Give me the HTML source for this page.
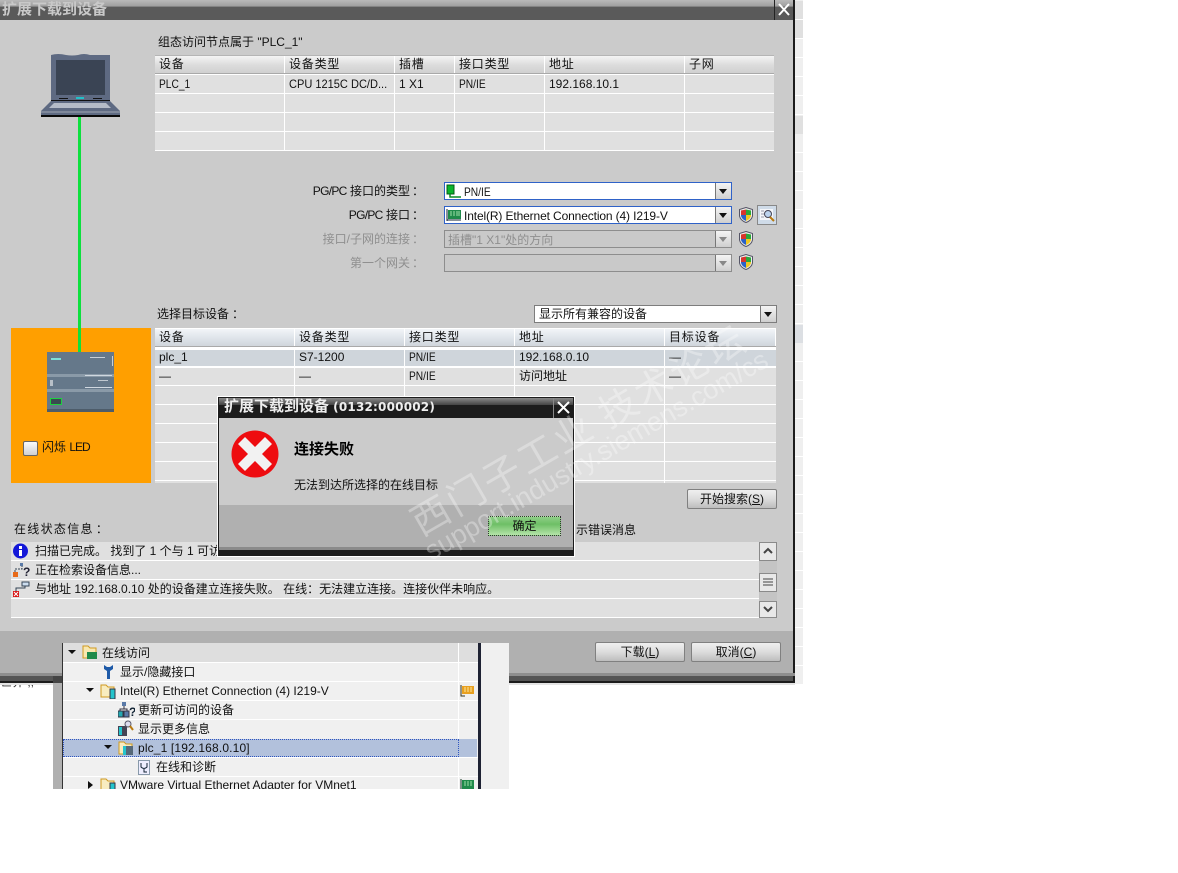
<!DOCTYPE html>
<html lang="zh"><head><meta charset="utf-8">
<style>
html,body{margin:0;padding:0;background:#fff;width:1178px;height:873px;overflow:hidden}
#r{position:relative;width:1178px;height:873px;overflow:hidden;font:12px/16px "Liberation Sans","WenQuanYi Zen Hei","Noto Sans CJK SC",sans-serif;color:#111}
#r div,#r svg{position:absolute}
.t{white-space:nowrap}
.g{color:#8f8f8f}
.hh{letter-spacing:.8px}
.n{transform:scaleX(.85);transform-origin:0 0}
.h{background:linear-gradient(#f4f4f4,#dcdcdc 50%,#cfcfcf);height:18px}
.h2{background:linear-gradient(#f2f5f8,#dfe4ea 50%,#ced4da);height:18px}
.c{background:#e0e0e0}
.b{background:linear-gradient(#efefef,#dcdcdc 50%,#bdbdbd);border:1px solid #808080;border-radius:2px;box-sizing:border-box;text-align:center;color:#111}
.sel{box-sizing:border-box;background:#fff;border:1px solid #2f62c8;height:18px}
.dis{box-sizing:border-box;background:#c9c9c9;border:1px solid #8d8d8d;height:18px}
.ar{box-sizing:border-box;width:16px;height:16px;right:0;top:0;background:linear-gradient(#f4f4f4,#cfcfcf);border-left:1px solid #777}
.ar:after{content:"";position:absolute;left:3px;top:6px;border:4px solid transparent;border-top:5px solid #111}
.dis .ar:after{border-top-color:#888}
</style></head><body><div id="r">

<!-- main dialog -->
<div style="left:0;top:0;width:793px;height:683px;background:#cbcbcb"></div>
<div style="left:0;top:0;width:793px;height:20px;background:linear-gradient(#b9b9b9,#a0a0a0 30%,#5a5a5a 36%,#5a5a5a)"></div>
<div class="t" style="left:2px;top:2px;font-size:15px;font-weight:bold;color:#c9c9c9">扩展下载到设备</div>
<div style="left:774px;top:0;width:1px;height:20px;background:#222"></div>
<svg style="left:775px;top:0" width="18" height="20"><path d="M4 4L14 15M14 4L4 15" stroke="#fff" stroke-width="2"/></svg>
<div style="left:793px;top:0;width:2px;height:683px;background:#1c1c1c"></div>
<div style="left:795px;top:0;width:8px;height:685px;background:repeating-linear-gradient(#efefef 0,#efefef 18px,#fff 18px,#fff 19px) 0 1px"></div>
<div style="left:795px;top:1px;width:8px;height:18px;background:#e0e0e0"></div>
<div style="left:795px;top:20px;width:8px;height:18px;background:#e0e0e0"></div>
<div style="left:795px;top:116px;width:8px;height:18px;background:#e0e0e0"></div>
<div style="left:795px;top:325px;width:8px;height:18px;background:#dcdfe3"></div>
<div style="left:0;top:631px;width:793px;height:42px;background:#b0b0b0"></div>
<div style="left:0;top:673px;width:795px;height:3px;background:#8e8e8e"></div>
<div style="left:0;top:676px;width:793px;height:5px;background:#555"></div>
<div style="left:0;top:681px;width:795px;height:2px;background:#1c1c1c"></div>
<div style="left:0;top:683px;width:795px;height:2px;background:#e4e4e4"></div>
<div class="t" style="left:0;top:685px;width:50px;height:3px;overflow:hidden;line-height:12px;color:#333"><span style="position:relative;top:-9px">世界 ,,</span></div>

<!-- laptop -->
<svg style="left:40px;top:52px" width="82" height="66" viewBox="0 0 82 66">
<path d="M11 3Q18 1 26 3Q32 4 38 3Q44 1 50 3H70V48H11Z" fill="#5e6a82"/>
<rect x="16" y="8" width="49" height="35" fill="#3a4454"/>
<rect x="36" y="45" width="8" height="2" fill="#22c0c8"/>
<rect x="19" y="46" width="9" height="1" fill="#111"/><rect x="53" y="46" width="9" height="1" fill="#111"/>
<rect x="11" y="48" width="59" height="1" fill="#111"/>
<path d="M11 49H70L80 59V63H1V59Z" fill="#5e6a82"/>
<path d="M14 51H66L71 56H9Z" fill="#b5bcc8"/>
<rect x="1" y="59" width="79" height="2" fill="#7f889a"/>
<rect x="1" y="63" width="79" height="2" fill="#0a0a0a"/>
</svg>
<div style="left:78px;top:117px;width:3px;height:235px;background:#0ee03e"></div>

<!-- table 1 -->
<div class="t" style="left:158px;top:34px">组态访问节点属于 "PLC_1"</div>
<div style="left:155px;top:55px;width:619px;height:96px;background:#fff"></div>
<div style="left:155px;top:55px;width:619px;height:1px;background:#b5b5b5"></div>
<div class="h" style="left:155px;top:56px;width:129px"></div><div class="h" style="left:285px;top:56px;width:109px"></div><div class="h" style="left:395px;top:56px;width:59px"></div><div class="h" style="left:455px;top:56px;width:89px"></div><div class="h" style="left:545px;top:56px;width:139px"></div><div class="h" style="left:685px;top:56px;width:89px"></div>
<div style="left:155px;top:73px;width:619px;height:1px;background:#a9a9a9"></div>
<div class="c" style="left:155px;top:75px;width:129px;height:18px"></div><div class="c" style="left:285px;top:75px;width:109px;height:18px"></div><div class="c" style="left:395px;top:75px;width:59px;height:18px"></div><div class="c" style="left:455px;top:75px;width:89px;height:18px"></div><div class="c" style="left:545px;top:75px;width:139px;height:18px"></div><div class="c" style="left:685px;top:75px;width:89px;height:18px"></div>
<div class="c" style="left:155px;top:94px;width:129px;height:18px"></div><div class="c" style="left:285px;top:94px;width:109px;height:18px"></div><div class="c" style="left:395px;top:94px;width:59px;height:18px"></div><div class="c" style="left:455px;top:94px;width:89px;height:18px"></div><div class="c" style="left:545px;top:94px;width:139px;height:18px"></div><div class="c" style="left:685px;top:94px;width:89px;height:18px"></div>
<div class="c" style="left:155px;top:113px;width:129px;height:18px"></div><div class="c" style="left:285px;top:113px;width:109px;height:18px"></div><div class="c" style="left:395px;top:113px;width:59px;height:18px"></div><div class="c" style="left:455px;top:113px;width:89px;height:18px"></div><div class="c" style="left:545px;top:113px;width:139px;height:18px"></div><div class="c" style="left:685px;top:113px;width:89px;height:18px"></div>
<div class="c" style="left:155px;top:132px;width:129px;height:18px"></div><div class="c" style="left:285px;top:132px;width:109px;height:18px"></div><div class="c" style="left:395px;top:132px;width:59px;height:18px"></div><div class="c" style="left:455px;top:132px;width:89px;height:18px"></div><div class="c" style="left:545px;top:132px;width:139px;height:18px"></div><div class="c" style="left:685px;top:132px;width:89px;height:18px"></div>
<div class="t hh" style="left:159px;top:56px">设备</div><div class="t hh" style="left:289px;top:56px">设备类型</div><div class="t hh" style="left:399px;top:56px">插槽</div><div class="t hh" style="left:459px;top:56px">接口类型</div><div class="t hh" style="left:549px;top:56px">地址</div><div class="t hh" style="left:689px;top:56px">子网</div>
<div class="t n" style="left:159px;top:76px">PLC_1</div><div class="t" style="left:289px;top:76px;transform:scaleX(.92);transform-origin:0 0">CPU 1215C DC/D...</div><div class="t" style="left:399px;top:76px">1 X1</div><div class="t n" style="left:459px;top:76px">PN/IE</div><div class="t" style="left:549px;top:76px">192.168.10.1</div>

<!-- interface form -->
<div class="t" style="right:754px;top:183px"><span style="letter-spacing:-.7px">PG/PC</span> 接口的类型<span style="margin-left:2px">：</span></div>
<div class="t" style="right:754px;top:207px"><span style="letter-spacing:-.7px">PG/PC</span> 接口<span style="margin-left:2px">：</span></div>
<div class="t g" style="right:754px;top:231px">接口/子网的连接<span style="margin-left:2px">：</span></div>
<div class="t g" style="right:754px;top:255px">第一个网关<span style="margin-left:2px">：</span></div>
<div class="sel" style="left:444px;top:182px;width:288px"><div class="ar"></div></div>
<div class="sel" style="left:444px;top:206px;width:288px"><div class="ar"></div></div>
<div class="dis" style="left:444px;top:230px;width:288px"><div class="ar"></div></div>
<div class="dis" style="left:444px;top:254px;width:288px"><div class="ar"></div></div>
<svg style="left:446px;top:184px" width="16" height="15"><rect x="1" y="1" width="7" height="9" fill="#0bb52c" stroke="#045a14"/><path d="M4 10V13H15" stroke="#0a8a22" stroke-width="1.5" fill="none"/></svg>
<div class="t n" style="left:464px;top:184px">PN/IE</div>
<svg style="left:446px;top:208px" width="16" height="14"><rect x="2" y="2" width="13" height="9" fill="#1f8a4a"/><path d="M1 1V13M1 12H15" stroke="#123" fill="none"/><path d="M5 3V8M8 3V8M11 3V8M13 3V8" stroke="#9fe0a8"/></svg>
<div class="t" style="left:464px;top:208px;letter-spacing:-.13px">Intel(R) Ethernet Connection (4) I219-V</div>
<div class="t g" style="left:448px;top:232px">插槽"1 X1"处的方向</div>
<svg style="left:739px;top:207px" width="14" height="16" viewBox="0 0 14 16"><path d="M7 .5L13.5 2.5V9Q12.5 13.5 7 15.5Q1.500 13.500 .5 9V2.500Z" fill="#eee" stroke="#556"/><path d="M7 2.500V8H2V3.500Z" fill="#d8342c"/><path d="M7 2.500L12 3.500V8H7Z" fill="#2aa83a"/><path d="M2 8H7V14Q3 12.500 2 9Z" fill="#2a62c8"/><path d="M7 8H12V9Q11 12.500 7 14Z" fill="#f0c820"/></svg>
<svg style="left:739px;top:231px" width="14" height="16" viewBox="0 0 14 16"><path d="M7 .5L13.5 2.5V9Q12.5 13.5 7 15.5Q1.500 13.500 .5 9V2.500Z" fill="#eee" stroke="#556"/><path d="M7 2.500V8H2V3.500Z" fill="#d8342c"/><path d="M7 2.500L12 3.500V8H7Z" fill="#2aa83a"/><path d="M2 8H7V14Q3 12.500 2 9Z" fill="#2a62c8"/><path d="M7 8H12V9Q11 12.500 7 14Z" fill="#f0c820"/></svg>
<svg style="left:739px;top:254px" width="14" height="16" viewBox="0 0 14 16"><path d="M7 .5L13.5 2.5V9Q12.5 13.5 7 15.5Q1.500 13.500 .5 9V2.500Z" fill="#eee" stroke="#556"/><path d="M7 2.500V8H2V3.500Z" fill="#d8342c"/><path d="M7 2.500L12 3.500V8H7Z" fill="#2aa83a"/><path d="M2 8H7V14Q3 12.500 2 9Z" fill="#2a62c8"/><path d="M7 8H12V9Q11 12.500 7 14Z" fill="#f0c820"/></svg>
<svg style="left:757px;top:205px" width="20" height="20"><rect x=".5" y=".5" width="19" height="19" fill="#cfdbe8" stroke="#888"/><rect x="3" y="4" width="13" height="11" fill="#f4f6fa"/><circle cx="11" cy="9" r="3.500" fill="#bcd3ee" stroke="#445"/><path d="M13 12L17 16" stroke="#b87a10" stroke-width="2"/><path d="M4 6H7M4 9H7M4 12H7" stroke="#99a"/></svg>

<!-- orange panel -->
<div style="left:11px;top:328px;width:140px;height:155px;background:#ff9f00"></div>
<div style="left:78px;top:328px;width:3px;height:24px;background:#0ee03e"></div>
<svg style="left:47px;top:352px" width="67" height="60" viewBox="0 0 67 60">
<rect width="67" height="60" fill="#65788a"/>
<rect y="22" width="67" height="3" fill="#8a9aa8"/><rect y="37" width="67" height="3" fill="#8a9aa8"/>
<rect x="4" y="6" width="10" height="2" fill="#7fe0d8"/>
<rect x="43" y="5" width="15" height="1" fill="#c8d0d8"/><rect x="65" y="4" width="1" height="10" fill="#c8d0d8"/>
<rect x="38" y="23" width="27" height="1" fill="#d0d8e0"/><rect x="38" y="35" width="27" height="1" fill="#d0d8e0"/><rect x="51" y="28" width="10" height="1" fill="#c0c8d0"/>
<rect x="3" y="28" width="3" height="6" fill="#b8c0c8"/>
<rect x="3.500" y="46.500" width="11" height="6" fill="#3a4a50" stroke="#1ed040"/>
<rect y="57" width="67" height="3" fill="#4d5c6a"/>
</svg>
<div style="left:23px;top:441px;width:15px;height:15px;box-sizing:border-box;background:linear-gradient(#fafafa,#d0d0d0);border:1px solid #666;border-radius:2px"></div>
<div class="t" style="left:42px;top:439px">闪烁 <span style="letter-spacing:-1px">LED</span></div>

<!-- table 2 -->
<div class="t" style="left:157px;top:306px">选择目标设备<span style="margin-left:3px">：</span></div>
<div style="left:534px;top:305px;width:243px;height:18px;box-sizing:border-box;background:#fff;border:1px solid #7d7d7d"><div class="ar" style="background:linear-gradient(#f4f4f4,#cfcfcf)"></div></div>
<div class="t" style="left:539px;top:306px">显示所有兼容的设备</div>
<div style="left:155px;top:328px;width:621px;height:155px;background:#fff"></div>
<div class="h2" style="left:155px;top:329px;width:139px"></div><div class="h2" style="left:295px;top:329px;width:109px"></div><div class="h2" style="left:405px;top:329px;width:109px"></div><div class="h2" style="left:515px;top:329px;width:149px"></div><div class="h2" style="left:665px;top:329px;width:110px"></div>
<div style="left:155px;top:346px;width:621px;height:1px;background:#a9a9a9"></div>
<div style="left:155px;top:350px;width:139px;height:16px;background:#cfd5db"></div><div style="left:295px;top:350px;width:109px;height:16px;background:#cfd5db"></div><div style="left:405px;top:350px;width:109px;height:16px;background:#cfd5db"></div><div style="left:515px;top:350px;width:149px;height:16px;background:#cfd5db"></div><div style="left:665px;top:350px;width:111px;height:16px;background:#cfd5db"></div>
<div class="c" style="left:155px;top:368px;width:139px;height:17px"></div><div class="c" style="left:295px;top:368px;width:109px;height:17px"></div><div class="c" style="left:405px;top:368px;width:109px;height:17px"></div><div class="c" style="left:515px;top:368px;width:149px;height:17px"></div><div class="c" style="left:665px;top:368px;width:111px;height:17px"></div>
<div class="c" style="left:155px;top:386px;width:139px;height:18px"></div><div class="c" style="left:295px;top:386px;width:109px;height:18px"></div><div class="c" style="left:405px;top:386px;width:109px;height:18px"></div><div class="c" style="left:515px;top:386px;width:149px;height:18px"></div><div class="c" style="left:665px;top:386px;width:111px;height:18px"></div>
<div class="c" style="left:155px;top:405px;width:139px;height:18px"></div><div class="c" style="left:295px;top:405px;width:109px;height:18px"></div><div class="c" style="left:405px;top:405px;width:109px;height:18px"></div><div class="c" style="left:515px;top:405px;width:149px;height:18px"></div><div class="c" style="left:665px;top:405px;width:111px;height:18px"></div>
<div class="c" style="left:155px;top:424px;width:139px;height:18px"></div><div class="c" style="left:295px;top:424px;width:109px;height:18px"></div><div class="c" style="left:405px;top:424px;width:109px;height:18px"></div><div class="c" style="left:515px;top:424px;width:149px;height:18px"></div><div class="c" style="left:665px;top:424px;width:111px;height:18px"></div>
<div class="c" style="left:155px;top:443px;width:139px;height:18px"></div><div class="c" style="left:295px;top:443px;width:109px;height:18px"></div><div class="c" style="left:405px;top:443px;width:109px;height:18px"></div><div class="c" style="left:515px;top:443px;width:149px;height:18px"></div><div class="c" style="left:665px;top:443px;width:111px;height:18px"></div>
<div class="c" style="left:155px;top:462px;width:139px;height:18px"></div><div class="c" style="left:295px;top:462px;width:109px;height:18px"></div><div class="c" style="left:405px;top:462px;width:109px;height:18px"></div><div class="c" style="left:515px;top:462px;width:149px;height:18px"></div><div class="c" style="left:665px;top:462px;width:111px;height:18px"></div>
<div class="c" style="left:155px;top:481px;width:139px;height:2px"></div><div class="c" style="left:295px;top:481px;width:109px;height:2px"></div><div class="c" style="left:405px;top:481px;width:109px;height:2px"></div><div class="c" style="left:515px;top:481px;width:149px;height:2px"></div><div class="c" style="left:665px;top:481px;width:111px;height:2px"></div>
<div class="t hh" style="left:159px;top:329px">设备</div><div class="t hh" style="left:299px;top:329px">设备类型</div><div class="t hh" style="left:409px;top:329px">接口类型</div><div class="t hh" style="left:519px;top:329px">地址</div><div class="t hh" style="left:669px;top:329px">目标设备</div>
<div class="t" style="left:159px;top:349px">plc_1</div><div class="t" style="left:299px;top:349px">S7-1200</div><div class="t n" style="left:409px;top:349px">PN/IE</div><div class="t" style="left:519px;top:349px">192.168.0.10</div><div class="t" style="left:669px;top:349px">—</div>
<div class="t" style="left:159px;top:368px">—</div><div class="t" style="left:299px;top:368px">—</div><div class="t n" style="left:409px;top:368px">PN/IE</div><div class="t" style="left:519px;top:368px">访问地址</div><div class="t" style="left:669px;top:368px">—</div>
<div class="b" style="left:687px;top:489px;width:90px;height:20px;line-height:19px">开始搜索(<u>S</u>)</div>

<!-- status -->
<div class="t" style="left:14px;top:521px;letter-spacing:1.300px">在线状态信息<span style="margin-left:2px">：</span></div>
<div class="t" style="left:576px;top:522px">示错误消息</div>
<div class="c" style="left:11px;top:542px;width:748px;height:18px"></div>
<div class="c" style="left:11px;top:561px;width:748px;height:18px"></div>
<div class="c" style="left:11px;top:580px;width:748px;height:18px"></div>
<div class="c" style="left:11px;top:599px;width:748px;height:18px"></div>
<div style="left:11px;top:560px;width:748px;height:1px;background:#fff"></div><div style="left:11px;top:579px;width:748px;height:1px;background:#fff"></div><div style="left:11px;top:598px;width:748px;height:1px;background:#fff"></div><div style="left:11px;top:617px;width:748px;height:1px;background:#fff"></div>
<svg style="left:12px;top:543px" width="17" height="16"><circle cx="8.500" cy="8" r="7.500" fill="#1418d8"/><rect x="7" y="7" width="3" height="6" fill="#fff"/><rect x="7" y="3" width="3" height="3" fill="#fff"/></svg>
<div class="t" style="left:35px;top:543px">扫描已完成。 找到了 1 个与 1 可访</div>
<svg style="left:12px;top:562px" width="18" height="16"><rect x="1" y="10" width="5" height="5" fill="#e86a18"/><rect x="8" y="1" width="3" height="3" fill="#5a7aa8"/><path d="M3 10V7H10V4" stroke="#345" stroke-dasharray="2 1" fill="none"/><text x="11" y="14" font-size="12" font-weight="bold" fill="#223" font-family="Liberation Sans">?</text></svg>
<div class="t" style="left:35px;top:562px">正在检索设备信息...</div>
<svg style="left:12px;top:581px" width="18" height="16"><rect x="1" y="10" width="6" height="6" fill="#d81818"/><path d="M2 11L6 15M6 11L2 15" stroke="#fff"/><rect x="10" y="1" width="7" height="4" fill="#cde" stroke="#345"/><path d="M13 5V7H4V10" stroke="#345" fill="none"/></svg>
<div class="t" style="left:35px;top:581px">与地址 192.168.0.10 处的设备建立连接失败。 在线：无法建立连接。连接伙伴未响应。</div>
<div style="left:759px;top:542px;width:18px;height:76px;background:#c4c4c4"></div>
<svg style="left:759px;top:542px" width="18" height="76"><rect x=".5" y=".5" width="17" height="18" fill="#e8e8e8" stroke="#8a8a8a"/><path d="M5 11L9 7L13 11" stroke="#444" stroke-width="2" fill="none"/><rect x=".5" y="31.500" width="17" height="18" fill="#e8e8e8" stroke="#8a8a8a"/><path d="M4 37H14M4 40H14M4 43H14" stroke="#444"/><rect x=".5" y="59.500" width="17" height="16" fill="#e8e8e8" stroke="#8a8a8a"/><path d="M5 65L9 69L13 65" stroke="#444" stroke-width="2" fill="none"/></svg>

<!-- buttons -->
<div class="b" style="left:595px;top:642px;width:90px;height:20px;line-height:19px">下载(<u>L</u>)</div>
<div class="b" style="left:691px;top:642px;width:90px;height:20px;line-height:19px">取消(<u>C</u>)</div>

<!-- error dialog -->
<div style="left:217px;top:396px;width:358px;height:161px;background:#fff"></div>
<div style="left:218px;top:397px;width:356px;height:159px;background:#1c1c1c"></div>
<div style="left:219px;top:398px;width:354px;height:7px;background:linear-gradient(#888,#444)"></div>
<div class="t" style="left:224px;top:399px;font-size:15px;font-weight:bold;color:#eee">扩展下载到设备 <span style="font:bold 12px 'DejaVu Sans',sans-serif;letter-spacing:.2px">(0132:000002)</span></div>
<div style="left:553px;top:398px;width:1px;height:20px;background:#888"></div>
<svg style="left:554px;top:398px" width="19" height="20"><path d="M4 4L15 15M15 4L4 15" stroke="#fff" stroke-width="2"/></svg>
<div style="left:219px;top:418px;width:354px;height:87px;background:#cbcbcb"></div>
<div style="left:219px;top:505px;width:354px;height:42px;background:#b0b0b0"></div>
<div style="left:219px;top:547px;width:354px;height:3px;background:#8a8a8a"></div>
<svg style="left:231px;top:430px" width="48" height="48"><circle cx="24" cy="24" r="23.500" fill="#ee0c10"/><path d="M7 14L14 7L24 17L34 7L41 14L31 24L41 34L34 41L24 31L14 41L7 34L17 24Z" fill="#f2f2f2"/></svg>
<div class="t" style="left:294px;top:442px;font-size:15px;font-weight:bold;color:#000">连接失败</div>
<div class="t" style="left:294px;top:477px">无法到达所选择的在线目标</div>
<div style="left:488px;top:516px;width:73px;height:20px;box-sizing:border-box;background:linear-gradient(#8fcf88,#6ebf66 40%,#b4e4a8);border:1px dotted #333;text-align:center;line-height:18px;color:#111">确定</div>

<!-- watermark -->
<div class="t" style="left:413px;top:501px;font-size:38px;line-height:44px;letter-spacing:3px;color:#fff;opacity:.32;transform:rotate(-30deg);transform-origin:0 50%;font-family:'Noto Sans CJK SC',sans-serif">西门子工业 技术论坛</div>
<div class="t" style="left:427px;top:538px;font-size:27px;line-height:30px;color:#fff;opacity:.32;transform:rotate(-30deg);transform-origin:0 50%">support.industry.siemens.com/cs</div>

<!-- lower tree panel -->
<div style="left:53px;top:643px;width:456px;height:146px;background:#f0f0f0"></div>
<div style="left:53px;top:643px;width:10px;height:30px;background:#b0b0b0"></div>
<div style="left:53px;top:673px;width:10px;height:3px;background:#8e8e8e"></div>
<div style="left:53px;top:676px;width:10px;height:7px;background:#444"></div>
<div style="left:53px;top:683px;width:10px;height:106px;background:#b0b0b0"></div>
<div style="left:62px;top:643px;width:1px;height:146px;background:#333"></div>
<div style="left:63px;top:643px;width:395px;height:19px;background:#dedede"></div>
<div style="left:459px;top:643px;width:19px;height:19px;background:#dedede"></div>
<div style="left:63px;top:662px;width:415px;height:1px;background:#fff"></div><div style="left:63px;top:681px;width:415px;height:1px;background:#fff"></div><div style="left:63px;top:700px;width:415px;height:1px;background:#fff"></div><div style="left:63px;top:719px;width:415px;height:1px;background:#fff"></div><div style="left:63px;top:757px;width:415px;height:1px;background:#fff"></div><div style="left:63px;top:776px;width:415px;height:1px;background:#fff"></div>
<div style="left:458px;top:643px;width:1px;height:146px;background:#fff"></div>
<div style="left:478px;top:643px;width:3px;height:146px;background:#1e2233"></div>
<div style="left:63px;top:739px;width:414px;height:18px;background:#b2c1dc"></div>
<div style="left:63px;top:739px;width:396px;height:18px;box-sizing:border-box;border:1px dotted #2f55c0"></div>
<svg style="left:64px;top:646px" width="14" height="14"><path d="M4 4H12L8 8Z" fill="#111"/></svg>
<svg style="left:82px;top:645px" width="16" height="15"><path d="M1 1H6L8 3H14V13H1Z" fill="#f8e8b0" stroke="#d09a20"/><rect x="5" y="7" width="10" height="7" fill="#1f8a4a"/></svg>
<div class="t" style="left:102px;top:645px">在线访问</div>
<svg style="left:102px;top:664px" width="12" height="16"><path d="M2 1V5L5 7V15H8V7L11 5V1L8 3H5Z" fill="#1e5aa8"/></svg>
<div class="t" style="left:120px;top:664px">显示/隐藏接口</div>
<svg style="left:82px;top:684px" width="14" height="14"><path d="M4 4H12L8 8Z" fill="#111"/></svg>
<svg style="left:100px;top:683px" width="16" height="16"><path d="M1 2H6L8 4H14V14H1Z" fill="#f8ecc0" stroke="#d09a20"/><rect x="10" y="6" width="5" height="10" fill="#24c4cc" stroke="#334"/></svg>
<div class="t" style="left:120px;top:683px">Intel(R) Ethernet Connection (4) I219-V</div>
<svg style="left:460px;top:685px" width="15" height="12"><rect x="2" y="1" width="12" height="8" fill="#e8a020"/><path d="M1 0V11H5" stroke="#332" fill="none"/><path d="M5 2V7M8 2V7M11 2V7" stroke="#fbe7a0"/></svg>
<svg style="left:118px;top:702px" width="17" height="16"><rect x="4" y="0" width="4" height="4" fill="#5a7aa8"/><rect x="0" y="9" width="5" height="6" fill="#24a8b0" stroke="#334"/><rect x="6" y="9" width="5" height="6" fill="#5a7aa8" stroke="#334"/><path d="M6 4V7M2 9V7H9V9" stroke="#334" fill="none"/><text x="11" y="14" font-size="12" font-weight="bold" fill="#123" font-family="Liberation Sans">?</text></svg>
<div class="t" style="left:138px;top:702px">更新可访问的设备</div>
<svg style="left:118px;top:720px" width="17" height="17"><rect x="0" y="6" width="9" height="10" fill="#445"/><rect x="1" y="7" width="3" height="8" fill="#24c4cc"/><circle cx="10" cy="4" r="3" fill="#dde" stroke="#556"/><path d="M12 6L15 10" stroke="#b87a10" stroke-width="2"/></svg>
<div class="t" style="left:138px;top:721px">显示更多信息</div>
<svg style="left:100px;top:741px" width="14" height="14"><path d="M4 4H12L8 8Z" fill="#111"/></svg>
<svg style="left:118px;top:740px" width="16" height="16"><path d="M1 2H6L8 4H14V14H1Z" fill="#f8ecc0" stroke="#d09a20"/><rect x="5" y="6" width="3" height="9" fill="#24c4cc"/><rect x="8" y="6" width="7" height="9" fill="#556878"/></svg>
<div class="t" style="left:138px;top:740px;letter-spacing:.15px">plc_1 [192.168.0.10]</div>
<svg style="left:138px;top:760px" width="12" height="15"><rect x=".5" y=".5" width="11" height="14" fill="#eef" stroke="#89a"/><path d="M3 3V7Q6 10 9 7V3M6 9V12H9" stroke="#123" fill="none"/></svg>
<div class="t" style="left:156px;top:759px">在线和诊断</div>
<div style="left:63px;top:777px;width:415px;height:12px;overflow:hidden">
<svg style="left:20px;top:1px" width="14" height="14"><path d="M5 3V11L10 7Z" fill="#111"/></svg>
<svg style="left:37px;top:0" width="16" height="16"><path d="M1 2H6L8 4H14V14H1Z" fill="#f8ecc0" stroke="#d09a20"/><rect x="10" y="6" width="5" height="10" fill="#24c4cc" stroke="#334"/></svg>
<div class="t" style="left:57px;top:0">VMware Virtual Ethernet Adapter for VMnet1</div>
<svg style="left:397px;top:2px" width="15" height="12"><rect x="2" y="1" width="12" height="9" fill="#1f8a4a"/><path d="M1 0V11" stroke="#132"/><path d="M5 2V7M8 2V7M11 2V7" stroke="#9fe0a8"/></svg>
</div>
</div></body></html>
